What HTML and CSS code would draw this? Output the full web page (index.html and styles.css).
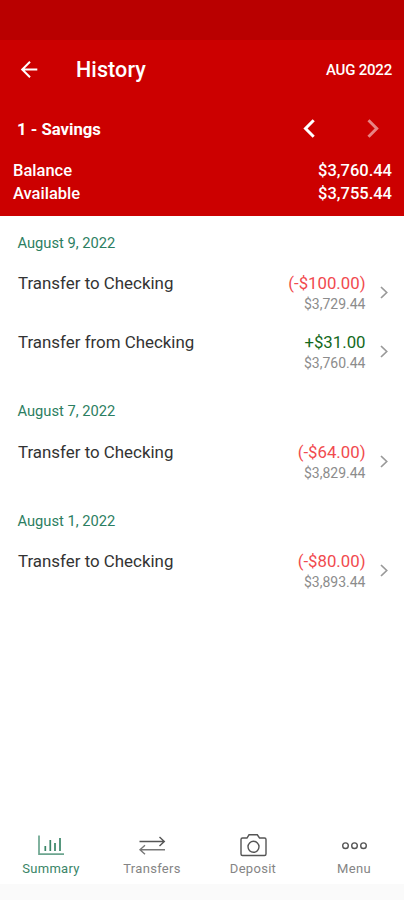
FILE: index.html
```
<!DOCTYPE html>
<html lang="en">
<head>
<meta charset="utf-8">
<meta name="viewport" content="width=device-width, initial-scale=1">
<title>History</title>
<link rel="stylesheet" href="styles.css">
</head>
<body>
<div class="screen">
  <div class="status-bar"></div>
  <header class="header">
    <div class="app-bar">
      <svg class="back" width="18" height="18" viewBox="0 0 18 18"><path d="M17.3 8.500H2M10 0.700L2.200 8.500l7.800 7.800"/></svg>
      <h1 class="title">History</h1>
      <span class="month">AUG 2022</span>
    </div>
    <div class="account">
      <span class="account-name">1 - Savings</span>
      <svg class="step" width="14" height="20" viewBox="0 0 14 20"><path d="M11.7 1.200L3.500 9.500l8.200 8.300"/></svg>
      <svg class="step step-disabled" width="14" height="20" viewBox="0 0 14 20"><path d="M2.500 1.200L10.700 9.500l-8.200 8.300"/></svg>
    </div>
    <div class="totals">
      <div class="total"><span>Balance</span><span>$3,760.44</span></div>
      <div class="total"><span>Available</span><span>$3,755.44</span></div>
    </div>
  </header>
  <main class="list">
    <h2 class="date">August 9, 2022</h2>
    <div class="row">
      <span class="name">Transfer to Checking</span>
      <div class="figures"><span class="amount debit">(-$100.00)</span><span class="balance">$3,729.44</span></div>
      <svg class="chevron" width="8" height="13" viewBox="0 0 8 13"><path d="M1 1l5.700 5.500L1 12"/></svg>
    </div>
    <div class="row">
      <span class="name">Transfer from Checking</span>
      <div class="figures"><span class="amount credit">+$31.00</span><span class="balance">$3,760.44</span></div>
      <svg class="chevron" width="8" height="13" viewBox="0 0 8 13"><path d="M1 1l5.700 5.500L1 12"/></svg>
    </div>
    <h2 class="date">August 7, 2022</h2>
    <div class="row">
      <span class="name">Transfer to Checking</span>
      <div class="figures"><span class="amount debit">(-$64.00)</span><span class="balance">$3,829.44</span></div>
      <svg class="chevron" width="8" height="13" viewBox="0 0 8 13"><path d="M1 1l5.700 5.500L1 12"/></svg>
    </div>
    <h2 class="date">August 1, 2022</h2>
    <div class="row">
      <span class="name">Transfer to Checking</span>
      <div class="figures"><span class="amount debit">(-$80.00)</span><span class="balance">$3,893.44</span></div>
      <svg class="chevron" width="8" height="13" viewBox="0 0 8 13"><path d="M1 1l5.700 5.500L1 12"/></svg>
    </div>
  </main>
  <nav class="tabs">
    <div class="tab tab-active">
      <svg width="28" height="24" viewBox="0 0 28 24"><path class="axis" d="M2 1.500v18.700H27"/><path d="M8.300 12v5M13.300 6v11M18 9v8M23 4v13"/></svg>
      <span class="tab-label">Summary</span>
    </div>
    <div class="tab">
      <svg width="28" height="24" viewBox="0 0 28 24"><path d="M1.500 7.500h25M21.500 3l4.800 4.500-4.800 4.500"/><path class="back-arrow" d="M27 15.800h-25M7 11.300L2 15.800l5 4.500"/></svg>
      <span class="tab-label">Transfers</span>
    </div>
    <div class="tab">
      <svg width="28" height="24" viewBox="0 0 28 24"><path d="M3.500 4h4.500L10 0.800h8.300L20.500 4H25.500c1 0 1.500.500 1.500 1.500v14.500c0 1-.500 1.500-1.500 1.500H3.500c-1 0-1.500-.500-1.500-1.500V5.500C2 4.500 2.500 4 3.500 4z"/><circle cx="14.500" cy="12.800" r="5.500"/></svg>
      <span class="tab-label">Deposit</span>
    </div>
    <div class="tab">
      <svg width="28" height="24" viewBox="0 0 28 24"><circle cx="5.500" cy="11.700" r="2.800"/><circle cx="14.500" cy="11.700" r="2.800"/><circle cx="23.500" cy="11.700" r="2.800"/></svg>
      <span class="tab-label">Menu</span>
    </div>
  </nav>
  <div class="gesture-bar"></div>
</div>
</body>
</html>
```
FILE: styles.css
```
* { box-sizing: border-box; }
body { margin: 0; font-family: Roboto, "Liberation Sans", sans-serif; background: #fff; }
svg { flex: none; fill: none; }
h1, h2 { margin: 0; }
.screen { display: flex; flex-direction: column; width: 404px; height: 900px; }
.status-bar { height: 40px; background: #b90000; flex: none; }
.header { height: 176px; flex: none; background: #cc0000; color: #fff; padding: 0 12px 0 13px; }
.app-bar { display: flex; align-items: center; height: 60px; padding-left: 7px; }
.back { stroke: #fff; stroke-width: 2; }
.title { margin-left: 38px; font-size: 21.5px; line-height: 24px; font-weight: 500; letter-spacing: 0.1px; }
.month { margin-left: auto; font-size: 15px; font-weight: 500; letter-spacing: -0.2px; }
.account { display: flex; align-items: center; height: 57px; padding: 0 12px 0 4px; }
.account-name { flex: 1; padding-top: 1px; font-size: 16.7px; font-weight: 700; }
.step { stroke: #fff; stroke-width: 3; }
.step-disabled { margin-left: 50px; stroke: #e88484; }
.totals { padding-top: 2px; }
.total { display: flex; justify-content: space-between; font-size: 16.5px; line-height: 23px; font-weight: 500; }
.list { flex: 1; margin-top: -3px; }
.date { height: 50.3px; padding: 21px 0 0 17.5px; font-size: 14.7px; line-height: 18px; font-weight: 400; color: #2b7e61; }
.row { display: flex; height: 59px; padding: 10px 16px 0 18px; }
.name { flex: 1; font-size: 16.9px; line-height: 21px; color: #333; }
.figures { display: flex; flex-direction: column; align-items: flex-end; }
.amount { font-size: 16.8px; line-height: 21px; }
.debit { color: #f14a4e; }
.credit { color: #14691c; }
.balance { font-size: 14px; line-height: 20px; color: #8c8c8c; }
.chevron { margin: 13px 0 0 14.5px; stroke: #999; stroke-width: 1.7; }
.tabs { display: grid; grid-template-columns: repeat(4, 1fr); height: 60px; flex: none; padding-top: 10px; }
.tab { display: flex; flex-direction: column; align-items: center; color: #858585; }
.tab svg { stroke: #555; stroke-width: 1.4; }
.tab .back-arrow { stroke: #777; }
.tab-active { color: #398567; }
.tab-active svg { stroke: #398567; stroke-width: 1.7; }
.tab-active .axis { stroke: #6ca58f; }
.tab-label { margin-top: 3px; padding-left: 1px; font-size: 13px; line-height: 16px; letter-spacing: 0.3px; }
.gesture-bar { height: 16px; flex: none; background: #fafafa; }
```
